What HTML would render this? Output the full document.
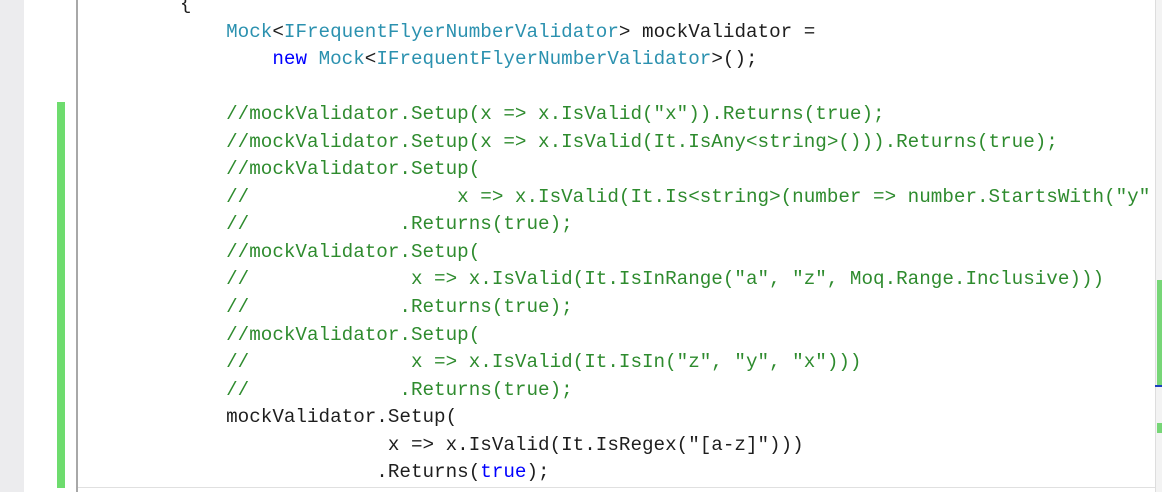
<!DOCTYPE html>
<html><head><meta charset="utf-8"><style>
body{margin:0;width:1162px;height:492px;overflow:hidden;background:#fff;position:relative}
.lg{position:absolute;left:0;top:0;width:24px;height:492px;background:#ececee}
.vl{position:absolute;left:76px;top:0;width:2px;height:492px;background:#a8a8a8}
.gb{position:absolute;left:57px;top:102px;width:8px;height:386px;background:#6edc6e}
.bl{position:absolute;left:78px;top:487px;width:1080px;height:1px;background:#e0e0e0}
.sb{position:absolute;left:1155px;top:0;width:7px;height:492px;background:#f3f3f3;border-left:1px solid #ddd}
pre{position:absolute;left:87.5px;top:-9px;margin:0;font-family:"Liberation Mono",monospace;font-size:19.25px;line-height:27.55px;color:#1e1e1e}
.c{color:#2e8b2e}.t{color:#2b91af}.k{color:#0000ff}
</style></head><body>
<div class="lg"></div><div class="vl"></div><div class="gb"></div><div class="bl"></div>
<div class="sb"></div>
<div style="position:absolute;left:1157px;top:280px;width:5px;height:105px;background:#77d677"></div>
<div style="position:absolute;left:1155px;top:385px;width:7px;height:2px;background:#1d3fbf"></div>
<div style="position:absolute;left:1157px;top:423px;width:5px;height:10px;background:#77d677"></div>
<pre>        {
            <span class="t">Mock</span>&lt;<span class="t">IFrequentFlyerNumberValidator</span>&gt; mockValidator =
                <span class="k">new</span> <span class="t">Mock</span>&lt;<span class="t">IFrequentFlyerNumberValidator</span>&gt;();

            <span class="c">//mockValidator.Setup(x =&gt; x.IsValid("x")).Returns(true);</span>
            <span class="c">//mockValidator.Setup(x =&gt; x.IsValid(It.IsAny&lt;string&gt;())).Returns(true);</span>
            <span class="c">//mockValidator.Setup(</span>
            <span class="c">//                  x =&gt; x.IsValid(It.Is&lt;string&gt;(number =&gt; number.StartsWith("y"</span>
            <span class="c">//             .Returns(true);</span>
            <span class="c">//mockValidator.Setup(</span>
            <span class="c">//              x =&gt; x.IsValid(It.IsInRange("a", "z", Moq.Range.Inclusive)))</span>
            <span class="c">//             .Returns(true);</span>
            <span class="c">//mockValidator.Setup(</span>
            <span class="c">//              x =&gt; x.IsValid(It.IsIn("z", "y", "x")))</span>
            <span class="c">//             .Returns(true);</span>
            mockValidator.Setup(
                          x =&gt; x.IsValid(It.IsRegex("[a-z]")))
                         .Returns(<span class="k">true</span>);
</pre>
</body></html>
